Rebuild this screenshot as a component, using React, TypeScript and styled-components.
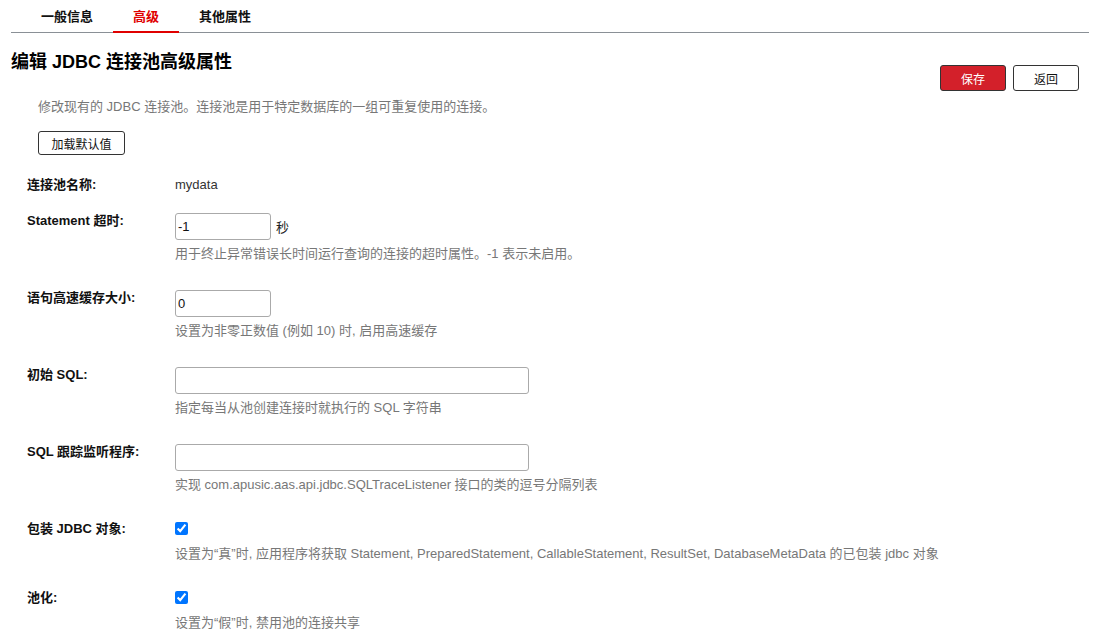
import React, { ReactElement } from 'react'
import styled, { createGlobalStyle } from 'styled-components';

const GlobalStyle = createGlobalStyle`
    body {
        margin : 0;
        background : #fff;
        font-family : "Liberation Sans", "Noto Sans CJK SC", sans-serif;
        font-size : 13px;
        color : #222;
    }
`;

const StyledPage = styled.div `
    width : 1095px;
    padding : 0 6px 0 11px;
    box-sizing : border-box;
`;

const StyledTabBar = styled.div `
    display : flex;
    flex-direction : row;
    padding-left : 10px;
    border-bottom : 1px solid #8a9096;
`;

const StyledTab = styled.div<{ $active?: boolean }> `
    padding : 9px 20px 6px;
    line-height : 16px;
    font-size : 13px;
    font-weight : bold;
    color : ${p => p.$active ? '#e00000' : '#111'};
    border-bottom : 2px solid ${p => p.$active ? '#e00000' : 'transparent'};
    margin-bottom : -1px;
`;

const StyledHeader = styled.div `
    display : flex;
    flex-direction : row;
    justify-content : space-between;
    align-items : flex-start;
    padding-right : 10px;
`;

const StyledTitle = styled.h1 `
    margin : 18px 0 0;
    font-size : 18px;
    line-height : 22px;
    font-weight : bold;
    color : #000;
`;

const StyledActions = styled.div `
    display : flex;
    gap : 7px;
    margin-top : 32px;
`;

const StyledButton = styled.button<{ $primary?: boolean; $width?: number; $height?: number }> `
    font-family : inherit;
    font-size : 12px;
    width : ${p => p.$width || 66}px;
    height : ${p => p.$height || 26}px;
    padding : 0;
    border-radius : 3px;
    border : 1px solid #333;
    background : ${p => p.$primary ? '#d3202a' : '#fff'};
    color : ${p => p.$primary ? '#fff' : '#111'};
    cursor : pointer;
`;

const StyledDescription = styled.p `
    margin : 8px 0 0 27px;
    line-height : 16px;
    color : #777;
`;

const StyledLoadRow = styled.div `
    margin : 16px 0 0 27px;
`;

const StyledForm = styled.div `
    display : flex;
    flex-direction : column;
    margin-top : 22px;
    padding-left : 16px;
`;

const StyledRow = styled.div<{ $gap?: number }> `
    display : grid;
    grid-template-columns : 148px 1fr;
    margin-bottom : ${p => p.$gap ?? 28}px;
`;

const StyledLabel = styled.div `
    font-weight : bold;
    line-height : 16px;
    color : #111;
`;

const StyledValue = styled.div `
    line-height : 16px;
    color : #333;
`;

const StyledField = styled.div `
    display : flex;
    align-items : center;
    gap : 5px;
`;

const StyledInput = styled.input<{ $width: number }> `
    width : ${p => p.$width}px;
    height : 27px;
    box-sizing : border-box;
    padding : 1px 2px;
    border : 1px solid #aaa;
    border-radius : 3px;
    font-family : inherit;
    font-size : 13px;
    color : #111;
    outline : none;
`;

const StyledHelp = styled.div<{ $top?: number }> `
    margin-top : ${p => p.$top ?? 6}px;
    line-height : 16px;
    color : #777;
`;

const StyledCheck = styled.input `
    margin : 1px 0 0;
    width : 13px;
    height : 13px;
    display : block;
    accent-color : #0075ff;
`;

interface Row {
    label : string;
    help : string;
    value? : string;
    width? : number;
    unit? : string;
    check? : boolean;
}

let rows : Row[] = [
    { label : 'Statement 超时:', value : '-1', width : 96, unit : '秒', help : '用于终止异常错误长时间运行查询的连接的超时属性。-1 表示未启用。' },
    { label : '语句高速缓存大小:', value : '0', width : 96, help : '设置为非零正数值 (例如 10) 时, 启用高速缓存' },
    { label : '初始 SQL:', value : '', width : 354, help : '指定每当从池创建连接时就执行的 SQL 字符串' },
    { label : 'SQL 跟踪监听程序:', value : '', width : 354, help : '实现 com.apusic.aas.api.jdbc.SQLTraceListener 接口的类的逗号分隔列表' },
    { label : '包装 JDBC 对象:', check : true, help : '设置为“真”时, 应用程序将获取 Statement, PreparedStatement, CallableStatement, ResultSet, DatabaseMetaData 的已包装 jdbc 对象' },
    { label : '池化:', check : true, help : '设置为“假”时, 禁用池的连接共享' },
];

function FormRow({ row } : { row : Row }) : ReactElement {
    return (
        <StyledRow>
            <StyledLabel>{row.label}</StyledLabel>
            <div>
                {row.check ? (
                    <StyledCheck type="checkbox" defaultChecked />
                ) : (
                    <StyledField>
                        <StyledInput $width={row.width || 96} defaultValue={row.value} />
                        {row.unit && <span>{row.unit}</span>}
                    </StyledField>
                )}
                <StyledHelp $top={row.check ? 11 : 6}>{row.help}</StyledHelp>
            </div>
        </StyledRow>
    )
}

function App() : ReactElement {
    return (
        <StyledPage>
            <GlobalStyle />
            <StyledTabBar>
                <StyledTab>一般信息</StyledTab>
                <StyledTab $active>高级</StyledTab>
                <StyledTab>其他属性</StyledTab>
            </StyledTabBar>
            <StyledHeader>
                <StyledTitle>编辑 JDBC 连接池高级属性</StyledTitle>
                <StyledActions>
                    <StyledButton $primary>保存</StyledButton>
                    <StyledButton>返回</StyledButton>
                </StyledActions>
            </StyledHeader>
            <StyledDescription>修改现有的 JDBC 连接池。连接池是用于特定数据库的一组可重复使用的连接。</StyledDescription>
            <StyledLoadRow>
                <StyledButton $width={87} $height={24}>加载默认值</StyledButton>
            </StyledLoadRow>
            <StyledForm>
                <StyledRow $gap={20}>
                    <StyledLabel>连接池名称:</StyledLabel>
                    <StyledValue>mydata</StyledValue>
                </StyledRow>
                {rows.map(r => <FormRow key={r.label} row={r} />)}
            </StyledForm>
        </StyledPage>
    )
}

export default App
